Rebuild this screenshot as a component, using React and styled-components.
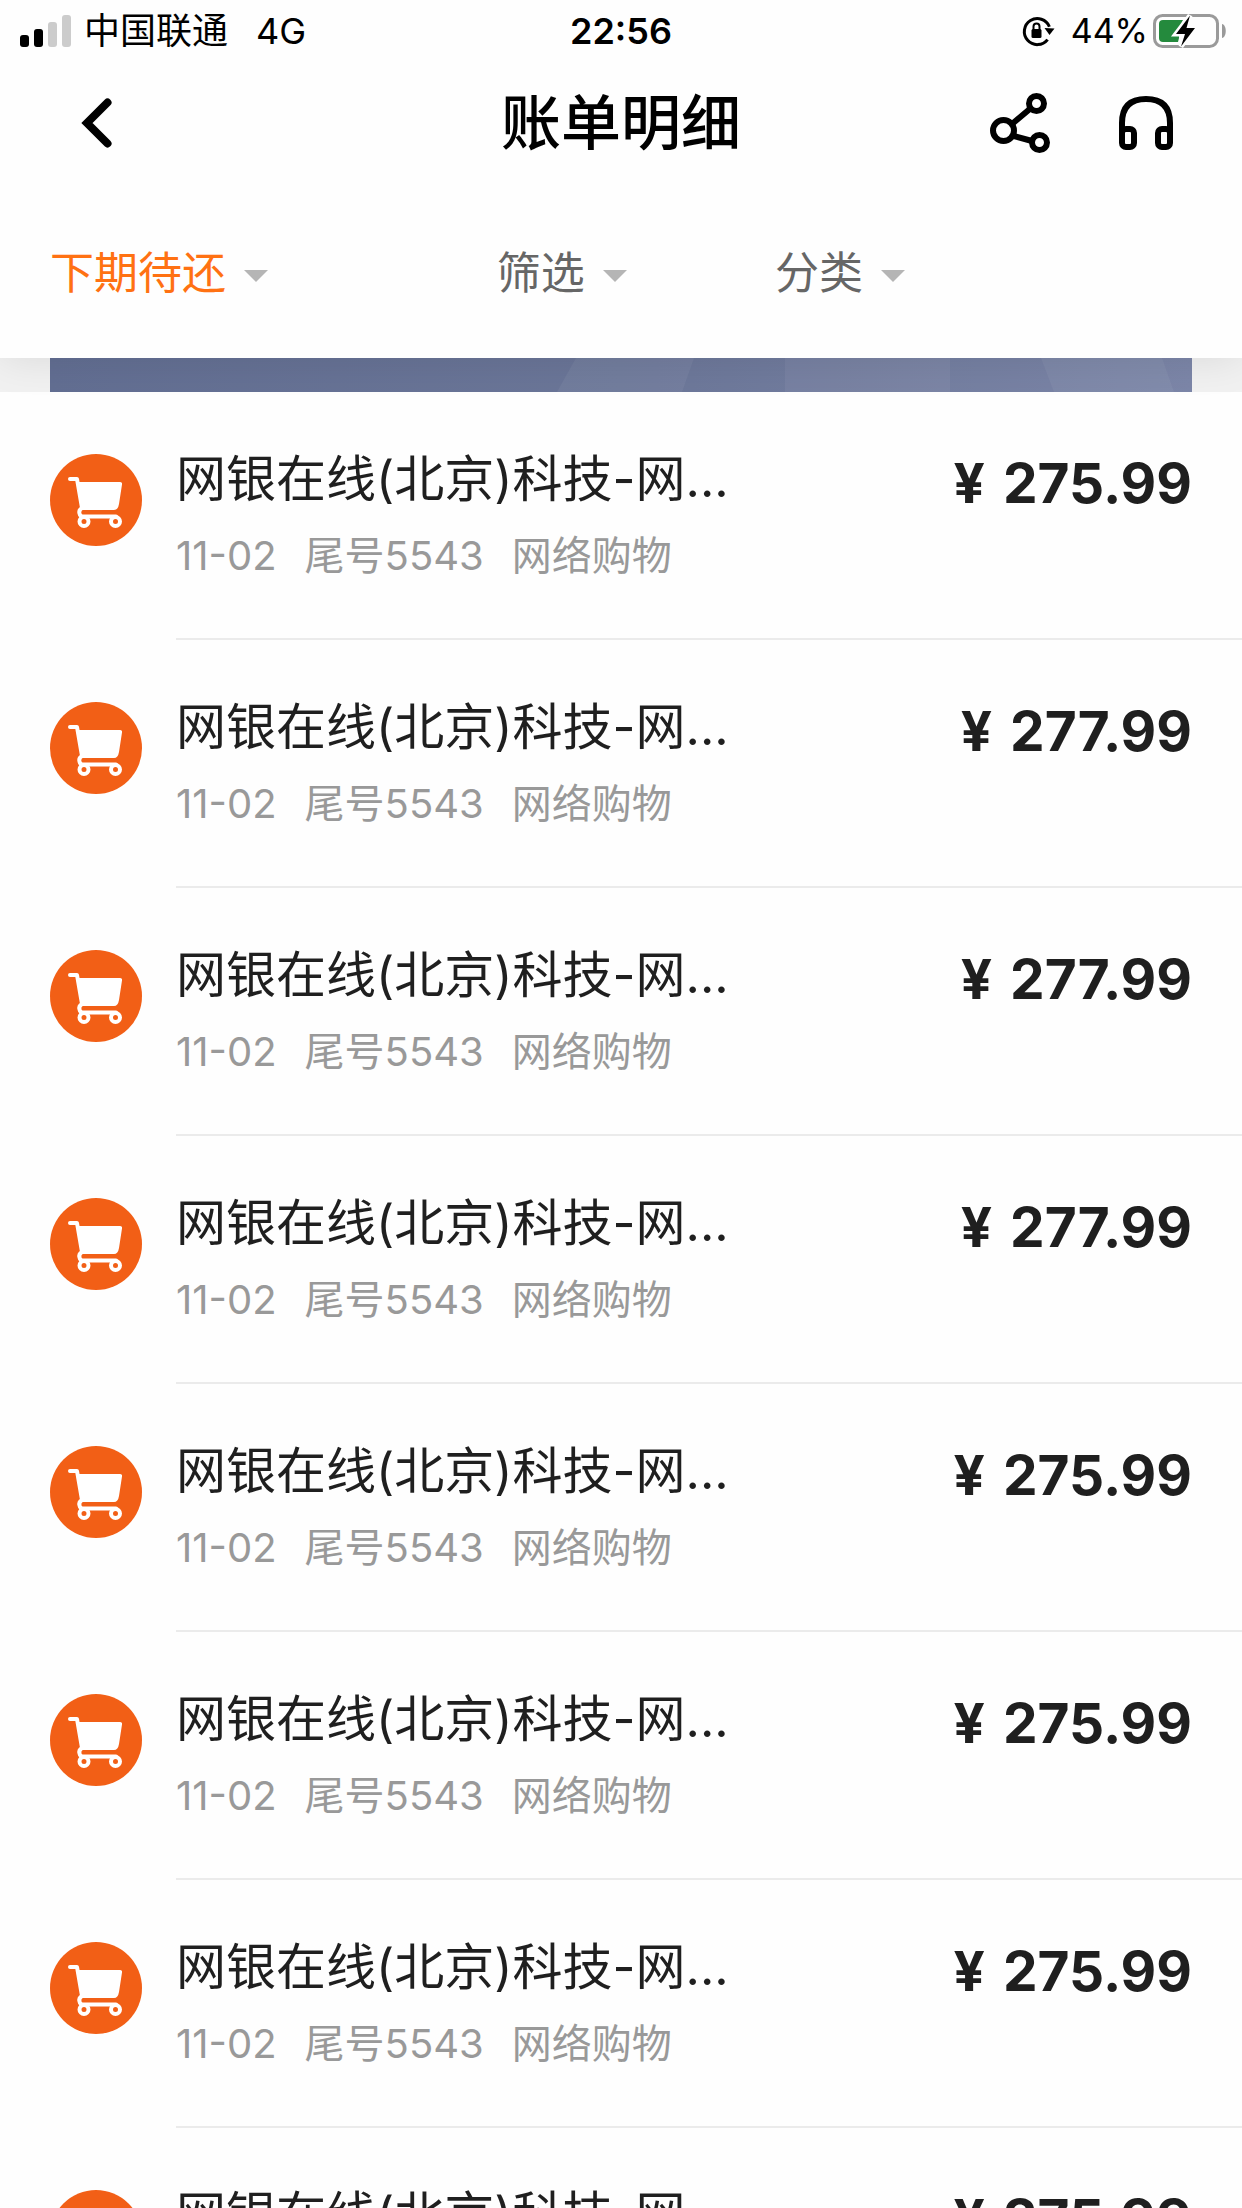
import { useState } from "react";
import styled, { createGlobalStyle } from "styled-components";

const GlobalStyle = createGlobalStyle`
  * {
    box-sizing: border-box;
  }
  body {
    margin: 0;
    background: #fefefe;
    font-family: Inter, "Noto Sans CJK SC", sans-serif;
    color: #1f1f1f;
  }
  #root {
    height: 100vh;
    overflow: hidden;
  }
`;

const Top = styled.div`
  position: relative;
  z-index: 1;
  background: #fefefe;
  box-shadow: 0 0 40px rgba(0, 0, 0, 0.1);
`;

const StatusBar = styled.div`
  display: grid;
  grid-template-columns: 1fr auto 1fr;
  align-items: center;
  height: 62px;
  padding: 0 16px;
  font-size: 36px;
  line-height: 44px;
  color: #000;
`;

const StatusGroup = styled.div`
  display: flex;
  align-items: center;
  justify-content: ${(props) => (props.$end ? "flex-end" : "flex-start")};
  gap: ${(props) => (props.$end ? "4px" : "12px")};
  svg {
    flex: none;
  }
`;

const Network = styled.span`
  margin-left: 16px;
`;

const Percent = styled.span`
  margin-left: 12px;
  font-size: 34px;
`;

const Time = styled.time`
  font-weight: 600;
`;

const NavBar = styled.header`
  display: grid;
  grid-template-columns: 1fr auto 1fr;
  align-items: center;
  height: 122px;
  padding: 0 66px;
`;

const Title = styled.h1`
  margin: 0;
  font-size: 60px;
  font-weight: 500;
  line-height: 80px;
  color: #000;
`;

const Actions = styled.div`
  display: flex;
  justify-content: flex-end;
  gap: 66px;
`;

const IconButton = styled.button`
  display: flex;
  justify-self: start;
  padding: 0;
  border: none;
  background: none;
  color: #000;
  cursor: pointer;
`;

const Filters = styled.nav`
  display: grid;
  grid-template-columns: 45fr 28fr 42fr;
  align-items: center;
  height: 174px;
  padding: 4px 50px 0;
`;

const FilterButton = styled.button`
  display: flex;
  align-items: center;
  gap: 18px;
  padding: 0;
  border: none;
  background: none;
  font-family: inherit;
  font-size: 44px;
  line-height: 60px;
  color: ${(props) => (props.$active ? "#ff7112" : "#666")};
  cursor: pointer;
`;

const Caret = styled.span`
  margin-top: 6px;
  border: 12px solid transparent;
  border-top-color: #b5b5b5;
  border-bottom: none;
`;

const BannerStrip = styled.div`
  padding: 0 50px;
  background: #f1f1f1;
`;

const Banner = styled.div`
  height: 34px;
  overflow: hidden;
  background: linear-gradient(90deg, #626e92, #6b7698 50%, #7c86a8);
  svg {
    display: block;
    width: 100%;
    height: 100%;
  }
`;

const List = styled.ul`
  margin: 0;
  padding: 0;
  list-style: none;
`;

const Row = styled.li`
  display: flex;
  align-items: flex-start;
  gap: 34px;
  padding-left: 50px;
`;

const Badge = styled.svg`
  flex: none;
  width: 92px;
  height: 92px;
  margin-top: 62px;
`;

const RowBody = styled.div`
  flex: 1;
  display: flex;
  justify-content: space-between;
  min-width: 0;
  height: 248px;
  padding: 57px 50px 0 0;
  border-bottom: 2px solid #ebebeb;
  white-space: nowrap;
`;

const Name = styled.div`
  font-size: 50px;
  line-height: 60px;
`;

const Meta = styled.div`
  display: flex;
  gap: 28px;
  margin-top: 21px;
  font-size: 40px;
  line-height: 52px;
  color: #999;
`;

const Amount = styled.div`
  display: flex;
  gap: 18px;
  padding-top: 4px;
  font-size: 55px;
  font-weight: 700;
  line-height: 60px;
`;

const SignalIcon = () => (
  <svg width="56" height="34" viewBox="-4 0 56 34">
    <rect x="0" y="21" width="9" height="12" rx="3" />
    <rect x="14" y="15" width="9" height="18" rx="3" />
    <rect x="28" y="8" width="9" height="25" rx="3" fill="#ccc" />
    <rect x="42" y="1" width="9" height="32" rx="3" fill="#ccc" />
  </svg>
);

const LockIcon = () => (
  <svg width="33" height="32" viewBox="0 0 33 32" fill="none" stroke="#000">
    <path d="M27.4 11.8A13 13 0 1 0 25.6 24.6" strokeWidth="3" />
    <path d="M22.500 13L32.500 13.500L27.500 20z" fill="#000" stroke="none" />
    <rect x="9.5" y="14" width="10" height="9" rx="1.5" fill="#000" stroke="none" />
    <path d="M11.5 15v-3.5a3 3 0 0 1 6 0V15" strokeWidth="2" />
  </svg>
);

const BatteryIcon = () => (
  <svg width="74" height="36" viewBox="-1 0 74 36">
    <rect x="1.5" y="2.5" width="63" height="31" rx="8" fill="none" stroke="#9a9a9a" strokeWidth="3" />
    <path d="M69 11c5 1 5 13 0 14z" fill="#9a9a9a" />
    <path d="M10 7h20L20 29H10a4 4 0 0 1-4-4V11a4 4 0 0 1 4-4z" fill="#248a3d" />
    <path d="M10 18h16v7l-1 4H10z" fill="#248a3d" />
    <path
      d="M37 2.500L23 21H32L28 33.500L42 15H33.500z"
      fill="#000"
      stroke="#fefefe"
      strokeWidth="5"
      paintOrder="stroke"
    />
  </svg>
);

const BackIcon = () => (
  <svg width="64" height="64" viewBox="2 0 64 64" fill="none" stroke="currentColor" strokeWidth="8">
    <path d="M43.500 11.500L23 32L43.500 52.500" strokeLinecap="round" />
  </svg>
);

const ShareIcon = () => (
  <svg width="60" height="60" viewBox="0 0 60 60" fill="none" stroke="currentColor" strokeWidth="6">
    <circle cx="13.500" cy="37.500" r="10.500" />
    <circle cx="46.500" cy="10.500" r="7.500" />
    <circle cx="49.500" cy="49.500" r="7.500" />
    <path d="M22 31L41 15M24 43L42 48" />
  </svg>
);

const HeadphoneIcon = () => (
  <svg width="60" height="60" viewBox="0 0 60 60" fill="none" stroke="currentColor" strokeWidth="6">
    <path d="M6 50V30C6 14 14 6 30 6S54 14 54 30V50" />
    <rect x="6" y="36" width="12" height="18" rx="4" />
    <rect x="42" y="36" width="12" height="18" rx="4" />
  </svg>
);

const CartBadge = () => (
  <Badge viewBox="0 0 92 92" aria-hidden="true">
    <circle cx="46" cy="46" r="46" fill="#f25f16" />
    <path d="M27 28H70Q72.500 28 72 30.500L69 50Q68 56 64 56H31z" fill="#fff" />
    <g fill="none" stroke="#fff" strokeWidth="4" strokeLinecap="round" strokeLinejoin="round">
      <path d="M20 25H27L32 54Q28.500 56 29.500 59.500Q30 62.500 33 62.500H66" />
      <circle cx="34" cy="67.500" r="4.500" />
      <circle cx="65.500" cy="67.500" r="4.500" />
    </g>
  </Badge>
);

const filters = ["下期待还", "筛选", "分类"];

const amounts = ["275.99", "277.99", "277.99", "277.99", "275.99", "275.99", "275.99", "275.99"];

const bills = amounts.map((amount, id) => ({
  id,
  amount,
  name: "网银在线(北京)科技-网...",
  date: "11-02",
  card: "尾号5543",
  category: "网络购物",
}));

const App = () => {
  const [active, setActive] = useState(filters[0]);
  return (
    <>
      <GlobalStyle />
      <Top>
        <StatusBar>
          <StatusGroup>
            <SignalIcon />
            <span>中国联通</span>
            <Network>4G</Network>
          </StatusGroup>
          <Time>22:56</Time>
          <StatusGroup $end>
            <LockIcon />
            <Percent>44%</Percent>
            <BatteryIcon />
          </StatusGroup>
        </StatusBar>
        <NavBar>
          <IconButton aria-label="返回">
            <BackIcon />
          </IconButton>
          <Title>账单明细</Title>
          <Actions>
            <IconButton aria-label="分享">
              <ShareIcon />
            </IconButton>
            <IconButton aria-label="客服">
              <HeadphoneIcon />
            </IconButton>
          </Actions>
        </NavBar>
        <Filters>
          {filters.map((label) => (
            <FilterButton key={label} $active={label === active} onClick={() => setActive(label)}>
              {label}
              <Caret />
            </FilterButton>
          ))}
        </Filters>
      </Top>
      <BannerStrip>
        <Banner>
          <svg viewBox="0 0 1142 34" preserveAspectRatio="none" fill="#fff" fillOpacity="0.05">
            <path d="M526 0H644L632 34H507z" />
            <path d="M735 0H900V34H735z" />
            <path d="M991 0H1112L1124 34H1004z" />
          </svg>
        </Banner>
      </BannerStrip>
      <List>
        {bills.map((bill) => (
          <Row key={bill.id}>
            <CartBadge />
            <RowBody>
              <div>
                <Name>{bill.name}</Name>
                <Meta>
                  <span>{bill.date}</span>
                  <span>{bill.card}</span>
                  <span>{bill.category}</span>
                </Meta>
              </div>
              <Amount>
                <span>¥</span>
                <span>{bill.amount}</span>
              </Amount>
            </RowBody>
          </Row>
        ))}
      </List>
    </>
  );
};

export default App;
